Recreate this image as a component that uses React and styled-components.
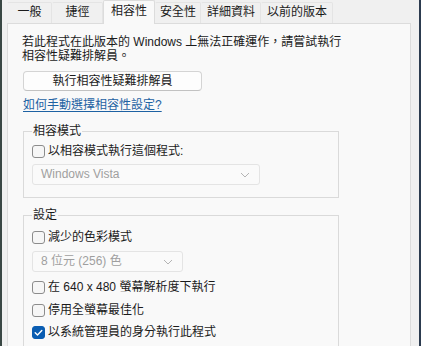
import styled, { createGlobalStyle } from 'styled-components';

const GlobalStyle = createGlobalStyle`
  html, body {
    margin: 0;
    padding: 0;
    background: #f0f0f0;
  }
  body {
    font-family: "Liberation Sans", "Noto Sans CJK TC", sans-serif;
    font-size: 12px;
    color: #1b1b1b;
  }
`;

const tabs = [
  { label: '一般', width: 45 },
  { label: '捷徑', width: 51 },
  { label: '相容性', width: 52, active: true },
  { label: '安全性', width: 46 },
  { label: '詳細資料', width: 60 },
  { label: '以前的版本', width: 72 },
];

const settings = [
  { label: '減少的色彩模式', select: '8 位元 (256) 色' },
  { label: '在 640 x 480 螢幕解析度下執行' },
  { label: '停用全螢幕最佳化' },
  { label: '以系統管理員的身分執行此程式', checked: true },
];

const Chevron = () => (
  <svg width="10" height="6" viewBox="0 0 10 6">
    <path d="M1 1 L5 5 L9 1" fill="none" stroke="#b4b4b4" strokeWidth="1" />
  </svg>
);

const Check = () => (
  <svg width="13" height="13" viewBox="0 0 13 13">
    <path d="M3.2 6.8 L5.5 9 L9.8 4.4" fill="none" stroke="#fff" strokeWidth="1.4" strokeLinecap="round" strokeLinejoin="round" />
  </svg>
);

const CheckRow = ({ label, checked }) => (
  <Row>
    <Box $checked={checked}>{checked && <Check />}</Box>
    <span>{label}</span>
  </Row>
);

const Dropdown = ({ value, width }) => (
  <Select $width={width}>
    <span>{value}</span>
    <Chevron />
  </Select>
);

export default function App() {
  return (
    <>
      <GlobalStyle />
      <Window>
        <Edge $color="#394744" />
        <Main>
          <TabBar>
            {tabs.map(({ label, width, active }) => (
              <Tab key={label} $width={width} $active={active}>
                {label}
              </Tab>
            ))}
          </TabBar>
          <Panel>
            <Intro>
              <Line>若此程式在此版本的 Windows 上無法正確運作，請嘗試執行</Line>
              <Line>相容性疑難排解員。</Line>
            </Intro>
            <Button>執行相容性疑難排解員</Button>
            <Link>如何手動選擇相容性設定?</Link>

            <Group>
              <Legend>相容模式</Legend>
              <CheckRow label="以相容模式執行這個程式:" />
              <Dropdown value="Windows Vista" width={228} />
            </Group>

            <Group $loose>
              <Legend>設定</Legend>
              {settings.map(({ label, select, checked }) => (
                <Item key={label}>
                  <CheckRow label={label} checked={checked} />
                  {select && <Dropdown value={select} width={151} />}
                </Item>
              ))}
            </Group>
          </Panel>
        </Main>
        <Edge $color="#2c3b4f" />
      </Window>
    </>
  );
}

const Window = styled.div`
  display: flex;
  width: 421px;
  height: 346px;
  overflow: hidden;
`;

const Edge = styled.div`
  width: 2px;
  flex-shrink: 0;
  background: ${(p) => p.$color};
`;

const Main = styled.div`
  flex: 1;
  padding: 0 8px 0 5px;
  display: flex;
  flex-direction: column;
`;

const TabBar = styled.div`
  display: flex;
  align-items: flex-end;
  height: 25px;
  position: relative;
  z-index: 1;
`;

const Tab = styled.div`
  box-sizing: border-box;
  width: ${(p) => p.$width}px;
  height: ${(p) => (p.$active ? 24 : 21)}px;
  margin-bottom: ${(p) => (p.$active ? -1 : 0)}px;
  border: 1px solid ${(p) => (p.$active ? '#dcdcdc' : '#e4e4e4')};
  border-bottom: none;
  border-left-color: ${(p) => (p.$active ? '#dcdcdc' : 'transparent')};
  border-radius: 2px 2px 0 0;
  background: ${(p) => (p.$active ? '#f9f9f9' : '#f0f0f0')};
  display: flex;
  justify-content: center;
  padding-top: ${(p) => (p.$active ? 4 : 3)}px;
  line-height: 13px;
  color: #1b1b1b;
  white-space: nowrap;
`;

const Panel = styled.div`
  flex: 1;
  box-sizing: border-box;
  background: #f9f9f9;
  border: 1px solid #dcdcdc;
  border-bottom: none;
  padding: 12px 15px 0 15px;
  display: flex;
  flex-direction: column;
  align-items: flex-start;
`;

const Intro = styled.div`
  margin: 0 0 0 -1px;
  display: flex;
  flex-direction: column;
  gap: 1px;
`;

const Line = styled.span`
  line-height: 13px;
  white-space: nowrap;
`;

const Button = styled.button`
  box-sizing: border-box;
  margin-top: 8px;
  width: 179px;
  height: 20px;
  padding: 0;
  font: inherit;
  line-height: 13px;
  color: #1b1b1b;
  background: #fdfdfd;
  border: 1px solid #d4d4d4;
  border-bottom-color: #c2c2c2;
  border-radius: 4px;
`;

const Link = styled.a`
  margin-top: 8px;
  line-height: 13px;
  color: #1e62a3;
  text-decoration: underline;
  text-underline-offset: 2px;
`;

const Group = styled.fieldset`
  box-sizing: border-box;
  width: 316px;
  margin: ${(p) => (p.$loose ? 11 : 13)}px 0 0 0;
  padding: ${(p) => (p.$loose ? 8 : 6)}px 8px 12px;
  border: 1px solid #dadada;
  display: flex;
  flex-direction: column;
  align-items: flex-start;
  gap: ${(p) => (p.$loose ? 8.5 : 6)}px;
`;

const Legend = styled.legend`
  padding: 0 1px;
  line-height: 13px;
  color: #1b1b1b;
`;

const Item = styled.div`
  display: flex;
  flex-direction: column;
  gap: 7px;
`;

const Row = styled.label`
  display: flex;
  align-items: center;
  gap: 3px;
  height: 14px;
  line-height: 13px;
  white-space: nowrap;
`;

const Box = styled.span`
  box-sizing: border-box;
  width: 13px;
  height: 13px;
  border-radius: 3px;
  border: 1px solid ${(p) => (p.$checked ? '#0a5db2' : '#8c8c8c')};
  background: ${(p) => (p.$checked ? '#0a5db2' : '#f6f6f6')};
  display: flex;
  align-items: center;
  justify-content: center;
  svg {
    margin: -1px;
  }
`;

const Select = styled.div`
  box-sizing: border-box;
  width: ${(p) => p.$width}px;
  height: 21px;
  padding: 0 9px 0 8px;
  border: 1px solid #e4e4e4;
  border-radius: 3px;
  background: #fafafa;
  color: #9f9f9f;
  display: flex;
  align-items: center;
  justify-content: space-between;
  line-height: 13px;
`;
